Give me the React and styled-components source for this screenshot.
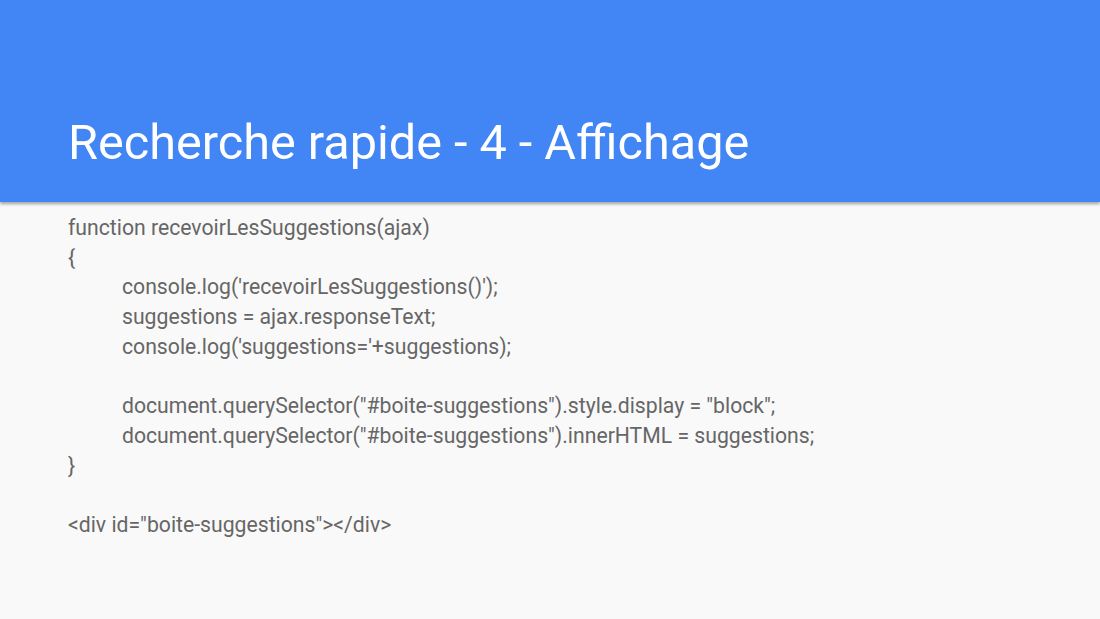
import React from "react";
import styled, { createGlobalStyle } from "styled-components";

const GlobalStyle = createGlobalStyle`
  html, body {
    margin: 0;
    padding: 0;
    background: #f9f9f9;
  }
  body {
    font-family: Roboto, "Liberation Sans", sans-serif;
  }
`;

const Slide = styled.div`
  width: 1100px;
  height: 619px;
  overflow: hidden;
  background: #f9f9f9;
  display: flex;
  flex-direction: column;
`;

const Header = styled.header`
  height: 202px;
  background: #4285f4;
  box-shadow: 0 2px 3px rgba(0, 0, 0, 0.35);
  display: flex;
  align-items: flex-end;
  padding: 0 68px 34px;
  box-sizing: border-box;
  position: relative;
  z-index: 1;
`;

const Title = styled.h1`
  margin: 0;
  font-family: Roboto, "Liberation Sans", sans-serif;
  font-weight: 400;
  font-size: 48.6px;
  line-height: 1;
  color: #ffffff;
`;

const Code = styled.div`
  padding: 11px 68px 0;
  display: flex;
  flex-direction: column;
`;

const Line = styled.div`
  height: 29.7px;
  line-height: 29.7px;
  font-size: 21.2px;
  color: #666666;
  white-space: pre;
  padding-left: ${(p) => (p.$indent ? "54px" : "0")};
`;

const lines = [
  { text: "function recevoirLesSuggestions(ajax)" },
  { text: "{" },
  { text: "console.log('recevoirLesSuggestions()');", indent: true },
  { text: "suggestions = ajax.responseText;", indent: true },
  { text: "console.log('suggestions='+suggestions);", indent: true },
  { text: "" },
  {
    text: 'document.querySelector("#boite-suggestions").style.display = "block";',
    indent: true,
  },
  {
    text: 'document.querySelector("#boite-suggestions").innerHTML = suggestions;',
    indent: true,
  },
  { text: "}" },
  { text: "" },
  { text: '<div id="boite-suggestions"></div>' },
];

export default function App() {
  return (
    <>
      <GlobalStyle />
      <Slide>
        <Header>
          <Title>Recherche rapide - 4 - Affichage</Title>
        </Header>
        <Code>
          {lines.map((l, i) => (
            <Line key={i} $indent={l.indent}>
              {l.text || " "}
            </Line>
          ))}
        </Code>
      </Slide>
    </>
  );
}
